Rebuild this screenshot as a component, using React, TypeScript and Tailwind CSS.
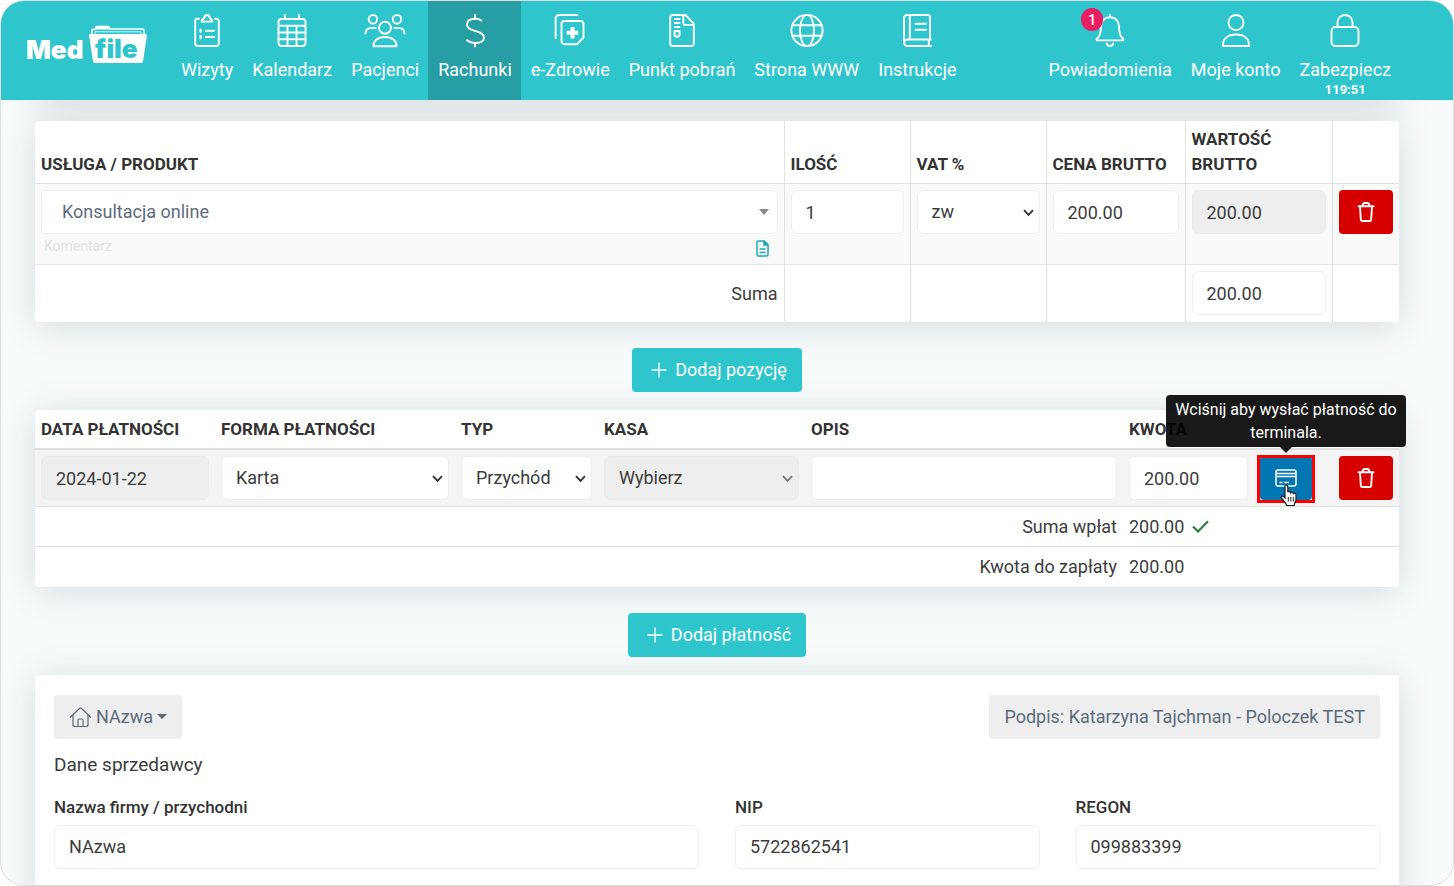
import React, { useState } from 'react';
import clsx from 'clsx';

interface NavItem {
  label: string;
  icon: React.ReactNode;
  active?: boolean;
  badge?: number;
  note?: string;
}

const INPUT = 'block w-full h-11 rounded-md border border-[#ebeff2] bg-white px-3.5 text-lg text-[#3c3c3c] outline-none';
const INPUT_DISABLED = 'block w-full h-11 rounded-md border border-[#e9ecee] bg-[#eeeeee] px-3.5 text-lg text-[#3c3c3c] outline-none';
const CARD = 'rounded-[4px] bg-white shadow-[0_4px_36px_rgba(30,50,50,0.15)]';

function NavSvg({ wide, children }: { wide?: boolean; children: React.ReactNode }) {
  return (
    <svg
      width={wide ? 42 : 34}
      height="34"
      viewBox={wide ? '0 0 42 34' : '0 0 34 34'}
      fill="none"
      stroke="currentColor"
      strokeWidth="1.9"
      strokeLinecap="round"
      strokeLinejoin="round"
      aria-hidden="true"
    >
      {children}
    </svg>
  );
}

const MAIN_NAV: NavItem[] = [
  {
    label: 'Wizyty',
    icon: (
      <NavSvg>
        <path d="M9 4.8H7.6A2.4 2.4 0 0 0 5.2 7.2v22.4A2.4 2.4 0 0 0 7.6 32h18.8a2.4 2.4 0 0 0 2.4-2.4V7.2a2.4 2.4 0 0 0-2.4-2.4H25" />
        <path d="M11.500 7.600h11M12 7.200c0-1.800 1-2.600 2-2.600C14.300 2.400 15.200 1 17 1s2.700 1.400 3 3.600c1 0 2 .8 2 2.600" />
        <path d="M15.800 16.800h8.500M15.800 23h8.500" />
        <path d="M10.600 15.800v2M10.600 22v2" strokeWidth="2.4" />
      </NavSvg>
    ),
  },
  {
    label: 'Kalendarz',
    icon: (
      <NavSvg>
        <rect x="3.5" y="5" width="27" height="27" rx="3" />
        <path d="M3.500 11.800h27M3.500 18.500h27M3.500 25.200h27M12.500 11.800V32M21.500 11.800V32M10 .9V5M24 .9V5" />
      </NavSvg>
    ),
  },
  {
    label: 'Pacjenci',
    icon: (
      <NavSvg wide>
        <circle cx="9" cy="5.3" r="4.3" />
        <circle cx="33" cy="5.3" r="4.3" />
        <circle cx="21" cy="13.8" r="6" />
        <path d="M9.400 32.200c0-5.600 4.600-9.200 11.600-9.200s11.600 3.600 11.600 9.200z" />
        <path d="M1.500 19.500c.3-3.700 2.700-5.600 6.300-5.600h4M40.500 19.500c-.3-3.700-2.700-5.600-6.300-5.600h-4" />
      </NavSvg>
    ),
  },
  {
    label: 'Rachunki',
    active: true,
    icon: (
      <NavSvg>
        <path d="M17 1v4M17 29v3.500" />
        <path d="M23.500 6.500C22 5.300 20 4.800 17.300 4.800c-5 0-8.300 2-8.300 5.700 0 3.800 3.700 5 8 6.400 4.700 1.500 9 2.600 9 6.600 0 3.600-3.400 5.500-8.300 5.500-3.600 0-6.700-.9-8.700-2.700" />
      </NavSvg>
    ),
  },
  {
    label: 'e-Zdrowie',
    icon: (
      <NavSvg>
        <path d="M2.600 24V4.400A3.400 3.400 0 0 1 6 1h18.500" />
        <path d="M11.500 7h16a3 3 0 0 1 3 3v13.500L24 30.300H11.500a3 3 0 0 1-3-3V10a3 3 0 0 1 3-3z" />
        <path d="M19.500 13v11.600M13.700 18.800h11.600" strokeWidth="4" strokeLinecap="butt" />
      </NavSvg>
    ),
  },
  {
    label: 'Punkt pobrań',
    icon: (
      <NavSvg>
        <path d="M20.500 1H7.600a2.400 2.400 0 0 0-2.400 2.400v26.200A2.400 2.400 0 0 0 7.600 32h18.800a2.400 2.400 0 0 0 2.400-2.400V9.600z" />
        <path d="M18.300 1v8.300a1.600 1.600 0 0 0 1.600 1.600h8.600" />
        <path d="M10 5h4.500M10 9h4.500M10 13h4.500" strokeWidth="2" />
        <path d="M9.600 17h5v3.200a2.500 2.500 0 0 1-5 0z" strokeWidth="2" />
      </NavSvg>
    ),
  },
  {
    label: 'Strona WWW',
    icon: (
      <NavSvg>
        <circle cx="17" cy="16.5" r="15.6" />
        <ellipse cx="17" cy="16.5" rx="7" ry="15.6" />
        <path d="M2.500 11.300h29M2.500 21.700h29" />
      </NavSvg>
    ),
  },
  {
    label: 'Instrukcje',
    icon: (
      <NavSvg>
        <path d="M30 25.500V2.900A1.900 1.900 0 0 0 28.100 1H7A3 3 0 0 0 4 4v25" />
        <path d="M31 25.500H7.400a3.200 3.200 0 0 0 0 6.500H31M28.800 25.500V32M9.800 1v24.500M15.500 9.800h10.500M15.500 15.800h10.500" />
      </NavSvg>
    ),
  },
];

const USER_NAV: NavItem[] = [
  {
    label: 'Powiadomienia',
    badge: 1,
    icon: (
      <NavSvg>
        <path d="M17 3.200V1M17 3.200c5.600 0 9 4 9 9.200 0 7 1.400 10 4 12.200.8.800.4 1.800-.7 1.800H4.700c-1.100 0-1.500-1-.7-1.800 2.600-2.200 4-5.200 4-12.200 0-5.200 3.400-9.200 9-9.200z" />
        <path d="M13.800 29.500a3.300 3.300 0 0 0 6.400 0" />
      </NavSvg>
    ),
  },
  {
    label: 'Moje konto',
    icon: (
      <NavSvg>
        <circle cx="17" cy="8.5" r="7.5" />
        <path d="M3.800 32C3.800 25 8.500 20.500 17 20.500S30.200 25 30.200 32z" />
      </NavSvg>
    ),
  },
  {
    label: 'Zabezpiecz',
    note: '119:51',
    icon: (
      <NavSvg>
        <rect x="3.5" y="13" width="27" height="19" rx="4" />
        <path d="M9.500 13V8.500a7.500 7.500 0 0 1 15 0V13" />
      </NavSvg>
    ),
  },
];

function Logo() {
  return (
    <a href="#" className="mt-6 shrink-0" aria-label="MedFile">
      <svg width="120" height="40" viewBox="0 0 120 40" aria-hidden="true">
        <text x="-1" y="34" fill="#fff" fontFamily="Inter, sans-serif" fontWeight="900" fontSize="26">Med</text>
        <path d="M65 10V4.500h3.500V2.500a1 1 0 0 1 1-1h12a1 1 0 0 1 1 1V4h33.500a1 1 0 0 1 1 1v5" fill="none" stroke="#fff" strokeWidth="1.4" />
        <path d="M69 2h13v2.500H69z" fill="#fff" />
        <path d="M68 9V6.800h46V9" fill="none" stroke="#fff" strokeWidth=".8" />
        <path d="M63 9h56a1 1 0 0 1 1 1.200l-4 26.300a2 2 0 0 1-2 1.500H68a2 2 0 0 1-2-1.500L62 10.200A1 1 0 0 1 63 9z" fill="#fff" />
        <text x="68" y="33" fill="#2fc5cd" fontFamily="Inter, sans-serif" fontWeight="900" fontSize="26">file</text>
      </svg>
    </a>
  );
}

function NavLink({ item }: { item: NavItem }) {
  return (
    <a
      href="#"
      className={clsx('flex flex-col items-center pl-[10px] pr-[9px] pt-[13px] text-white', item.active && 'bg-[#279ea4]')}
    >
      <span className="relative block">
        {item.icon}
        {item.badge && (
          <span className="absolute -left-3 -top-1.5 flex h-[23px] w-[22px] items-center justify-center rounded-full bg-[#e91e63] text-sm font-medium">
            {item.badge}
          </span>
        )}
      </span>
      <span className="mt-2 whitespace-nowrap text-lg leading-7">{item.label}</span>
      {item.note && <span className="text-[13px] font-bold leading-3">{item.note}</span>}
    </a>
  );
}

function SelectField({ label, value, disabled }: { label: string; value: string; disabled?: boolean }) {
  return (
    <div className="relative">
      <select
        aria-label={label}
        disabled={disabled}
        className={clsx(disabled ? INPUT_DISABLED : INPUT, 'appearance-none opacity-100')}
      >
        <option>{value}</option>
      </select>
      <svg
        className={clsx('pointer-events-none absolute right-1.5 top-[19px]', disabled ? 'text-[#777]' : 'text-[#333]')}
        width="11"
        height="8"
        viewBox="0 0 11 8"
        fill="none"
        stroke="currentColor"
        strokeWidth="1.9"
        aria-hidden="true"
      >
        <path d="M1 1.200l4.500 4.600L10 1.200" />
      </svg>
    </div>
  );
}

function TrashButton() {
  return (
    <button type="button" aria-label="Usuń" className="flex h-11 w-full items-center justify-center rounded-[4px] bg-[#d60000] text-white">
      <svg width="18" height="20" viewBox="0 0 18 20" fill="none" stroke="currentColor" strokeWidth="1.9" strokeLinejoin="round" strokeLinecap="round">
        <path d="M1.500 4.200h15M5.500 4C5.500 2 6.500 1 8 1h2c1.500 0 2.500 1 2.500 3M3 4.500l.8 12.800c.1 1 .7 1.700 1.700 1.700h7c1 0 1.600-.7 1.700-1.700L15 4.500" />
      </svg>
    </button>
  );
}

function AddButton({ children }: { children: React.ReactNode }) {
  return (
    <div className="mb-[18px] mt-[26px] flex justify-center">
      <button type="button" className="flex h-11 items-center gap-2 rounded-[4px] bg-[#2fc5cd] pl-[19px] pr-[15px] text-lg text-white">
        <svg width="16" height="16" viewBox="0 0 16 16" stroke="currentColor" strokeWidth="1.3" aria-hidden="true">
          <path d="M8 .5v15M.5 8h15" />
        </svg>
        {children}
      </button>
    </div>
  );
}

function ItemsTable() {
  const [quantity, setQuantity] = useState('1');
  const [price, setPrice] = useState('200.00');
  const cell = 'border-l border-[#dee2e3] px-1.5';

  return (
    <section className={CARD}>
      <table className="w-full table-fixed border-collapse text-left text-lg">
        <colgroup>
          <col />
          <col className="w-[126px]" />
          <col className="w-[136px]" />
          <col className="w-[139px]" />
          <col className="w-[147px]" />
          <col className="w-[67px]" />
        </colgroup>
        <thead>
          <tr className="border-b border-[#dee0e0] align-bottom text-[17px] leading-[25px] text-[#333]">
            <th className="px-1.5 py-1.5 font-bold">USŁUGA / PRODUKT</th>
            <th className={clsx(cell, 'py-1.5 font-bold')}>ILOŚĆ</th>
            <th className={clsx(cell, 'py-1.5 font-bold')}>VAT %</th>
            <th className={clsx(cell, 'py-1.5 font-bold')}>CENA BRUTTO</th>
            <th className={clsx(cell, 'py-1.5 font-bold')}>WARTOŚĆ BRUTTO</th>
            <td className={cell} />
          </tr>
        </thead>
        <tbody>
          <tr className="border-b border-[#e4e6e6] bg-[#f9f9f9] align-top">
            <td className="px-1.5 pt-1.5">
              <button type="button" className="flex h-11 w-full items-center justify-between rounded-md border border-[#ebeff2] bg-white pl-5 pr-2 text-[#5c6b7b]">
                Konsultacja online
                <span className="border-x-[5px] border-t-[6px] border-x-transparent border-t-[#888]" />
              </button>
              <div className="flex h-[30px] items-start justify-between pl-[3px] pr-[9px]">
                <input aria-label="Komentarz" placeholder="Komentarz" className="h-6 w-60 bg-transparent text-sm outline-none placeholder:text-[#e2e2e2]" />
                <button type="button" aria-label="Opis pozycji" className="mt-1.5 text-[#17adb5]">
                  <svg width="13" height="17" viewBox="0 0 13 17" fill="none" stroke="currentColor" strokeWidth="1.5" strokeLinejoin="round">
                    <path d="M8 1H2.300C1.500 1 1 1.500 1 2.300v12.400c0 .8.500 1.300 1.300 1.300h8.400c.8 0 1.300-.5 1.300-1.300V5z" />
                    <path d="M8 1v4h4z" fill="currentColor" />
                    <path d="M3.500 9h6M3.500 12.500h6" />
                  </svg>
                </button>
              </div>
            </td>
            <td className={clsx(cell, 'pt-1.5')}>
              <input aria-label="Ilość" value={quantity} onChange={e => setQuantity(e.target.value)} className={INPUT} />
            </td>
            <td className={clsx(cell, 'pt-1.5')}>
              <SelectField label="VAT %" value="zw" />
            </td>
            <td className={clsx(cell, 'pt-1.5')}>
              <input aria-label="Cena brutto" value={price} onChange={e => setPrice(e.target.value)} className={INPUT} />
            </td>
            <td className={clsx(cell, 'pt-1.5')}>
              <input aria-label="Wartość brutto" disabled value="200.00" className={INPUT_DISABLED} />
            </td>
            <td className={clsx(cell, 'pt-1.5')}>
              <TrashButton />
            </td>
          </tr>
          <tr>
            <td className="px-1.5 text-right text-[#3c3c3c]">Suma</td>
            <td className={cell} />
            <td className={cell} />
            <td className={cell} />
            <td className={clsx(cell, 'pb-[7px] pt-1.5')}>
              <input aria-label="Suma" readOnly value="200.00" className={INPUT} />
            </td>
            <td className={cell} />
          </tr>
        </tbody>
      </table>
    </section>
  );
}

function TerminalButton() {
  return (
    <div className="relative w-[52px]">
      <button type="button" aria-describedby="terminal-tip" aria-label="Terminal" className="flex h-11 w-full items-center justify-center rounded-[4px] bg-[#0077b3] text-white">
        <svg width="22" height="18" viewBox="0 0 22 18" fill="none" stroke="currentColor" strokeWidth="1.5">
          <rect x="1" y="1" width="20" height="16" rx="2" />
          <path d="M1 4.500h20M1 7.500h20M4.500 13.500h3M9 13.500h5" />
        </svg>
      </button>
      <span className="pointer-events-none absolute -inset-x-[3px] -bottom-[3px] -top-px border-[3px] border-[#f00]" />
      <div
        id="terminal-tip"
        role="tooltip"
        className="absolute bottom-full left-1/2 mb-[9px] w-[240px] -translate-x-1/2 rounded-[4px] bg-black/90 px-2 py-[3px] text-center text-base leading-[23px] text-white"
      >
        Wciśnij aby wysłać płatność do terminala.
        <span className="absolute left-1/2 top-full -translate-x-1/2 border-x-[6px] border-t-[6px] border-x-transparent border-t-black/90" />
      </div>
      <svg className="pointer-events-none absolute left-5 top-7" width="18" height="23" viewBox="0 0 18 23" aria-hidden="true">
        <path
          d="M5 1.800c0-1 2.800-1.200 2.800.4v6c.3-1 2.600-.9 2.800.5.500-.9 2.500-.6 2.700.8.600-.7 2.500-.3 2.700 1.200v4.500c0 2.600-1.500 3-1.800 6.300H6.700c-.5-2.500-4-5-5.300-8-.6-1.500 1.500-2.300 3.600.3z"
          fill="#fff"
          stroke="#1a1a1a"
          strokeWidth="1.2"
        />
        <path d="M8.300 13v4.500M10.800 13v4.500M13.300 13v4.500" stroke="#1a1a1a" />
      </svg>
    </div>
  );
}

function PaymentsTable() {
  const [amount, setAmount] = useState('200.00');
  const [note, setNote] = useState('');
  const th = 'px-1.5 font-bold';

  return (
    <section className={CARD}>
      <table className="w-full table-fixed border-collapse text-left text-lg text-[#3c3c3c]">
        <colgroup>
          <col className="w-[180px]" />
          <col className="w-[240px]" />
          <col className="w-[143px]" />
          <col className="w-[207px]" />
          <col />
          <col className="w-[131px]" />
          <col className="w-[79px]" />
          <col className="w-[66px]" />
        </colgroup>
        <thead>
          <tr className="h-[39px] border-b-2 border-[#dee0e0] text-[17px] leading-[25px] text-[#333]">
            <th className={th}>DATA PŁATNOŚCI</th>
            <th className={th}>FORMA PŁATNOŚCI</th>
            <th className={th}>TYP</th>
            <th className={th}>KASA</th>
            <th className={th}>OPIS</th>
            <th className={th}>KWOTA</th>
            <td />
            <td />
          </tr>
        </thead>
        <tbody>
          <tr className="border-b border-[#dee0e0] bg-[#f4f4f4]">
            <td className="p-1.5">
              <input aria-label="Data płatności" disabled value="2024-01-22" className={INPUT_DISABLED} />
            </td>
            <td className="p-1.5">
              <SelectField label="Forma płatności" value="Karta" />
            </td>
            <td className="p-1.5">
              <SelectField label="Typ" value="Przychód" />
            </td>
            <td className="p-1.5">
              <SelectField label="Kasa" value="Wybierz" disabled />
            </td>
            <td className="p-1.5">
              <input aria-label="Opis" value={note} onChange={e => setNote(e.target.value)} className={INPUT} />
            </td>
            <td className="p-1.5">
              <input aria-label="Kwota" value={amount} onChange={e => setAmount(e.target.value)} className={INPUT} />
            </td>
            <td className="p-1.5">
              <TerminalButton />
            </td>
            <td className="p-1.5">
              <TrashButton />
            </td>
          </tr>
          <tr className="h-10 border-b border-[#dee0e0]">
            <td colSpan={5} className="px-1.5 text-right">Suma wpłat</td>
            <td colSpan={3} className="px-1.5">
              <span className="flex items-center gap-2">
                200.00
                <svg width="17" height="13" viewBox="0 0 17 13" fill="none" stroke="#2e7d42" strokeWidth="2.2" aria-hidden="true">
                  <path d="M1 6.500l5 5L16 1.200" />
                </svg>
              </span>
            </td>
          </tr>
          <tr className="h-10">
            <td colSpan={5} className="px-1.5 text-right">Kwota do zapłaty</td>
            <td colSpan={3} className="px-1.5">200.00</td>
          </tr>
        </tbody>
      </table>
    </section>
  );
}

function SellerField({ id, label, value, wide }: { id: string; label: string; value: string; wide?: boolean }) {
  const [text, setText] = useState(value);
  return (
    <div className={wide ? 'col-span-2' : undefined}>
      <label htmlFor={id} className="mb-1.5 block text-[17px] font-medium leading-6 text-[#333]">{label}</label>
      <input id={id} value={text} onChange={e => setText(e.target.value)} className={INPUT} />
    </div>
  );
}

function SellerCard() {
  return (
    <section className={clsx(CARD, 'px-[19px] pb-10 pt-5 text-lg')}>
      <div className="flex justify-between">
        <button type="button" className="flex h-11 items-center rounded-[4px] bg-[#eeeeee] px-[15px] text-[#5c6b7b]">
          <svg className="mr-1" width="23" height="22" viewBox="0 0 23 22" fill="none" stroke="currentColor" strokeWidth="1.2" strokeLinejoin="round" strokeLinecap="round" aria-hidden="true">
            <path d="M1.500 11L10.800 2.200a1 1 0 0 1 1.400 0L21.500 11M4 9v9.500C4 19.800 4.800 20.500 6 20.500h11c1.200 0 2-.7 2-2V9" />
            <path d="M9 20.500V14c0-.6.400-1 1-1h3c.6 0 1 .4 1 1v6.500" />
          </svg>
          NAzwa
          <span className="ml-1 border-x-[5px] border-t-[5px] border-x-transparent border-t-[#5c6b7b]" />
        </button>
        <button type="button" className="h-11 rounded-[4px] bg-[#eeeeee] px-[15px] text-[#5c6b7b]">
          Podpis: Katarzyna Tajchman - Poloczek TEST
        </button>
      </div>
      <h2 className="mt-3 text-[19px] leading-7 text-[#3c3c3c]">Dane sprzedawcy</h2>
      <div className="mt-4 grid grid-cols-4 gap-9">
        <SellerField id="company" label="Nazwa firmy / przychodni" value="NAzwa" wide />
        <SellerField id="nip" label="NIP" value="5722862541" />
        <SellerField id="regon" label="REGON" value="099883399" />
      </div>
    </section>
  );
}

export default function App() {
  return (
    <div className="h-screen bg-white font-['Roboto',sans-serif]">
      <div className="flex h-full flex-col overflow-hidden rounded-[24px] border border-[#dcdfe0] bg-[#f7fbfc]">
        <header className="relative z-10 flex h-[99px] shrink-0 justify-between bg-[#2fc5cd] pl-[26px] pr-[53px]">
          <div className="flex gap-6">
            <Logo />
            <nav className="flex" aria-label="Menu">
              {MAIN_NAV.map(item => <NavLink key={item.label} item={item} />)}
            </nav>
          </div>
          <nav className="flex" aria-label="Konto">
            {USER_NAV.map(item => <NavLink key={item.label} item={item} />)}
          </nav>
        </header>

        <main className="min-h-0 flex-1 overflow-hidden pl-[34px] pr-[54px]">
          {/* bottom edge of the card scrolled under the header */}
          <div className={clsx(CARD, '-mt-10 mb-[21px] h-10')} />
          <ItemsTable />
          <AddButton>Dodaj pozycję</AddButton>
          <PaymentsTable />
          <AddButton>Dodaj płatność</AddButton>
          <SellerCard />
        </main>
      </div>
    </div>
  );
}
